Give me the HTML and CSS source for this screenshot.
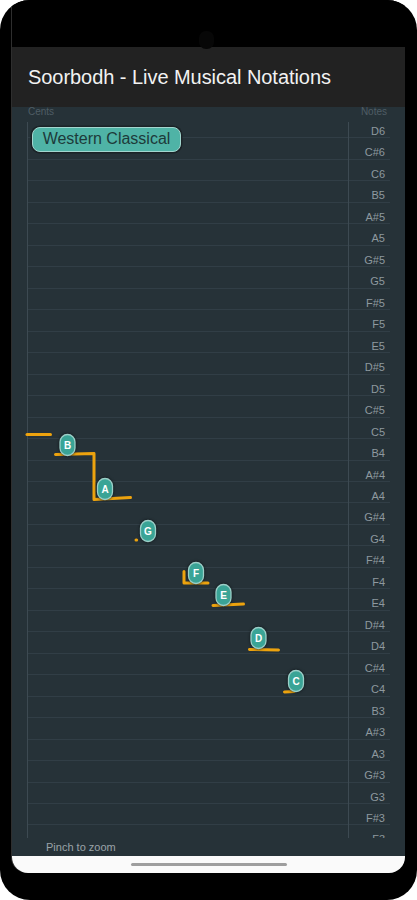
FILE: index.html
```html
<!DOCTYPE html>
<html>
<head>
<meta charset="utf-8">
<link rel="stylesheet" href="styles.css">
</head>
<body>
<div class="phone">
  <div class="screen">
    <div class="status"><span class="camera"></span></div>
    <header class="appbar"><h1 class="title">Soorbodh - Live Musical Notations</h1></header>
    <main class="chart">
      <div class="chart-head"><span>Cents</span><span>Notes</span></div>
      <div class="plot">
        <div class="row"><span class="lbl">D6</span></div>
        <div class="row"><span class="lbl">C#6</span></div>
        <div class="row"><span class="lbl">C6</span></div>
        <div class="row"><span class="lbl">B5</span></div>
        <div class="row"><span class="lbl">A#5</span></div>
        <div class="row"><span class="lbl">A5</span></div>
        <div class="row"><span class="lbl">G#5</span></div>
        <div class="row"><span class="lbl">G5</span></div>
        <div class="row"><span class="lbl">F#5</span></div>
        <div class="row"><span class="lbl">F5</span></div>
        <div class="row"><span class="lbl">E5</span></div>
        <div class="row"><span class="lbl">D#5</span></div>
        <div class="row"><span class="lbl">D5</span></div>
        <div class="row"><span class="lbl">C#5</span></div>
        <div class="row"><span class="lbl">C5</span></div>
        <div class="row"><span class="lbl">B4</span></div>
        <div class="row"><span class="lbl">A#4</span></div>
        <div class="row"><span class="lbl">A4</span></div>
        <div class="row"><span class="lbl">G#4</span></div>
        <div class="row"><span class="lbl">G4</span></div>
        <div class="row"><span class="lbl">F#4</span></div>
        <div class="row"><span class="lbl">F4</span></div>
        <div class="row"><span class="lbl">E4</span></div>
        <div class="row"><span class="lbl">D#4</span></div>
        <div class="row"><span class="lbl">D4</span></div>
        <div class="row"><span class="lbl">C#4</span></div>
        <div class="row"><span class="lbl">C4</span></div>
        <div class="row"><span class="lbl">B3</span></div>
        <div class="row"><span class="lbl">A#3</span></div>
        <div class="row"><span class="lbl">A3</span></div>
        <div class="row"><span class="lbl">G#3</span></div>
        <div class="row"><span class="lbl">G3</span></div>
        <div class="row"><span class="lbl">F#3</span></div>
        <div class="row"><span class="lbl">F3</span></div>
      </div>
      <div class="hint">Pinch to zoom</div>

      <svg class="trace" viewBox="12 107 393 749" width="393" height="749" xmlns="http://www.w3.org/2000/svg">
        <g class="pitch" fill="none" stroke="#eda30e" stroke-width="3" stroke-linecap="round" stroke-linejoin="round">
          <path d="M27 434.5 H50.5"/>
          <path d="M55.5 454.5 L94 453.5 V499.5 L130.5 497.5"/>
          <path d="M136 540 h0.6"/>
          <path d="M184 571.5 V583 H208"/>
          <path d="M213 605.5 L243.5 604"/>
          <path d="M249.5 649.5 L278.5 650"/>
          <path d="M284.5 692 L294 691.5"/>
        </g>
        <g class="marks">
          <g transform="translate(67.5 445)"><rect x="-7.5" y="-10.5" width="15" height="21" rx="7.5"/><text>B</text></g>
          <g transform="translate(105 489)"><rect x="-7.5" y="-10.5" width="15" height="21" rx="7.5"/><text>A</text></g>
          <g transform="translate(148 531)"><rect x="-7.5" y="-10.5" width="15" height="21" rx="7.5"/><text>G</text></g>
          <g transform="translate(196 573)"><rect x="-7.5" y="-10.5" width="15" height="21" rx="7.5"/><text>F</text></g>
          <g transform="translate(223.5 595)"><rect x="-7.5" y="-10.5" width="15" height="21" rx="7.5"/><text>E</text></g>
          <g transform="translate(258.5 638)"><rect x="-7.5" y="-10.5" width="15" height="21" rx="7.5"/><text>D</text></g>
          <g transform="translate(296 681)"><rect x="-7.5" y="-10.5" width="15" height="21" rx="7.5"/><text>C</text></g>
        </g>
      </svg>

      <div class="chip">Western Classical</div>
    </main>
    <nav class="nav"><span class="home"></span></nav>
  </div>
</div>
</body>
</html>
```

FILE: styles.css
```css
* { box-sizing: border-box; }
html, body { margin: 0; padding: 0; background: #ffffff; }
body { font-family: "Liberation Sans", Arial, sans-serif; }

.phone {
  width: 417px;
  height: 900px;
  background: #000;
  border-radius: 30px;
  padding: 0 12px 0 12px;
  overflow: hidden;
}

.screen {
  display: flex;
  flex-direction: column;
  width: 393px;
  box-shadow: -1px 0 0 #2e2e2e;
  border-radius: 0 0 16px 16px;
}

.status {
  height: 47px;
  background: #000;
  position: relative;
}
.camera {
  position: absolute;
  left: 187px;
  top: 31px;
  width: 15px;
  height: 18px;
  border-radius: 7px;
  background: #070707;
}

.appbar {
  height: 60px;
  background: #222222;
  display: flex;
  align-items: center;
  padding-left: 16px;
}
.title {
  margin: 0;
  font-size: 20px;
  font-weight: normal;
  color: #f2f2f2;
  letter-spacing: -0.05px;
}

.chart {
  position: relative;
  height: 749px;
  background: #263238;
  overflow: hidden;
}

.chart-head {
  height: 10px;
  display: flex;
  justify-content: space-between;
  align-items: flex-end;
  padding: 0 18px 0 16px;
  font-size: 10px;
  line-height: 10px;
  color: #4f5d65;
}

.plot {
  position: relative;
  margin-left: 15px;
  width: 363px;
  height: 721px;
  overflow: hidden;
  display: flex;
  flex-direction: column;
}
.plot::before {
  content: "";
  position: absolute;
  left: 0;
  top: 5px;
  bottom: 0;
  width: 1px;
  background: #3d4a52;
}
.plot::after {
  content: "";
  position: absolute;
  left: 321px;
  top: 5px;
  bottom: 0;
  width: 42px;
  border-left: 1px solid #3d4a52;
  border-right: 1px solid #3d4a52;
}

.row {
  flex: 0 0 21.47px;
  height: 21.47px;
  border-bottom: 1px solid #313e46;
  display: flex;
  justify-content: flex-end;
  padding-right: 5px;
}
.lbl {
  padding-top: 9px;
  font-size: 11px;
  line-height: 11px;
  color: #8e999f;
}

.hint {
  height: 18px;
  line-height: 18px;
  padding-left: 34px;
  font-size: 11px;
  color: #9aa3a8;
}

.trace {
  position: absolute;
  left: 0;
  top: 0;
}
.marks rect {
  fill: #3aa496;
  stroke: #9ccfc8;
  stroke-width: 1.3;
  filter: drop-shadow(0 0 1.5px #0c1216);
}
.marks text {
  fill: #ffffff;
  font-family: "Liberation Sans", Arial, sans-serif;
  font-size: 10px;
  font-weight: bold;
  text-anchor: middle;
  dominant-baseline: central;
}

.chip {
  position: absolute;
  left: 20px;
  top: 20px;
  width: 149px;
  height: 25px;
  border-radius: 8px;
  background: #4fb3a6;
  border: 1.5px solid #a3d6cf;
  box-shadow: 0 0 0 1.5px #1b2327;
  color: #1d3a3a;
  font-size: 16px;
  line-height: 22px;
  text-align: center;
}

.nav {
  height: 17px;
  background: #fafafa;
  border-radius: 0 0 16px 16px;
  display: flex;
  justify-content: center;
  align-items: center;
}
.home {
  width: 156px;
  height: 3px;
  border-radius: 2px;
  background: #9e9e9e;
}
```
